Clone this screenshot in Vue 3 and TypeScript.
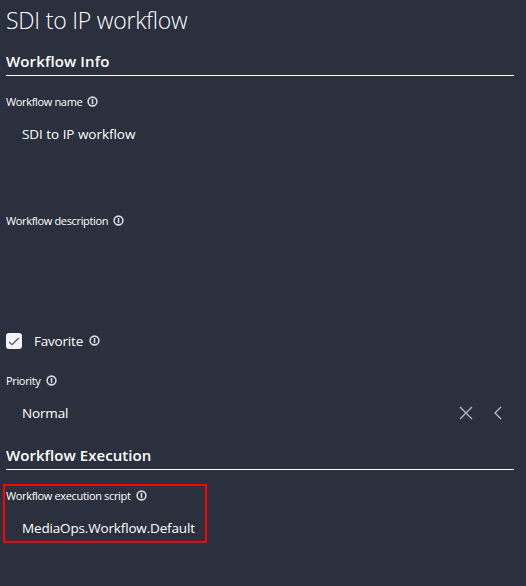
<script setup lang="ts">
import { h } from 'vue'

const Info = () => h('svg', { class: 'info', viewBox: '0 0 11 11' }, [
  h('circle', { cx: 5.5, cy: 5.5, r: 4.4 }),
  h('path', { d: 'M5.5 3V8' }),
])
</script>

<template>
  <main class="page">
    <h1>SDI to IP workflow</h1>
    <h2>Workflow Info</h2>
    <section class="field name">
      <label><span>Workflow name</span><Info /></label>
      <p class="wide">SDI to IP workflow</p>
    </section>
    <section class="field description">
      <label><span>Workflow description</span><Info /></label>
    </section>
    <div class="favorite">
      <span class="box"><svg viewBox="0 0 16 16"><path d="M3 8.8L6 11.7L12.7 5" /></svg></span>
      <span>Favorite</span><Info />
    </div>
    <section class="field priority">
      <label><span>Priority</span><Info /></label>
      <div class="select">
        <p>Normal</p>
        <svg class="clear" viewBox="0 0 14 14"><path d="M1 1L13 13M13 1L1 13" /></svg>
        <svg class="chev" viewBox="0 0 8 14"><path d="M7 1L1 7L7 13" /></svg>
      </div>
    </section>
    <h2 class="execution">Workflow Execution</h2>
    <section class="field script">
      <label><span>Workflow execution script</span><Info /></label>
      <p>MediaOps.Workflow.Default</p>
    </section>
  </main>
</template>

<style>
body { background: #2a303d; }
</style>
<style scoped>
.page { box-sizing: border-box; height: 586px; padding: 0 12px 0 6px; background: #2a303d; color: #fff; font-family: "Open Sans", "Noto Sans", sans-serif; overflow: hidden; }
h1, h2, p { margin: 0; }
h1 { height: 48px; line-height: 40px; font-size: 23px; font-weight: 300; letter-spacing: -.22px; }
h2 { height: 27px; line-height: 27px; font-size: 15px; font-weight: 600; letter-spacing: .12px; border-bottom: 1px solid #fff; }
.execution { letter-spacing: .05px; }
label { display: flex; align-items: center; gap: 5px; height: 16px; font-size: 11px; letter-spacing: -.34px; }
label span { margin-top: -1px; }
.field { padding-top: 18px; box-sizing: border-box; }
.name { height: 119px; }
.description { height: 138px; }
p { margin: 14px 0 0 16px; height: 20px; line-height: 20px; font-size: 13.5px; letter-spacing: -.16px; }
.wide { letter-spacing: -.04px; }
.info { width: 11px; height: 11px; margin-top: -1px; fill: none; stroke: #d5d8dd; stroke-width: 1.6; }
.favorite { display: flex; align-items: center; height: 16px; font-size: 13.5px; letter-spacing: -.2px; gap: 6px; }
.box { width: 16px; height: 16px; margin-right: 6px; border-radius: 3px; background: #f2f4f7; }
.box svg { display: block; fill: none; stroke: #455071; stroke-width: 1.1; }
.priority { height: 93px; padding-top: 24px; }
.select { display: flex; align-items: center; height: 20px; margin-top: 14px; }
.select p { flex: 1; margin-top: 0; }
.clear { width: 14px; height: 14px; fill: none; stroke: #b9bdc5; stroke-width: 1.3; }
.chev { width: 8px; height: 14px; margin: 0 12px 0 21px; fill: none; stroke: #b9bdc5; stroke-width: 1.3; }
.script { width: 204px; height: 59px; margin: 14px 0 0 -3px; padding: 2px 0 0 1px; border: 2px solid #f00; }
</style>
